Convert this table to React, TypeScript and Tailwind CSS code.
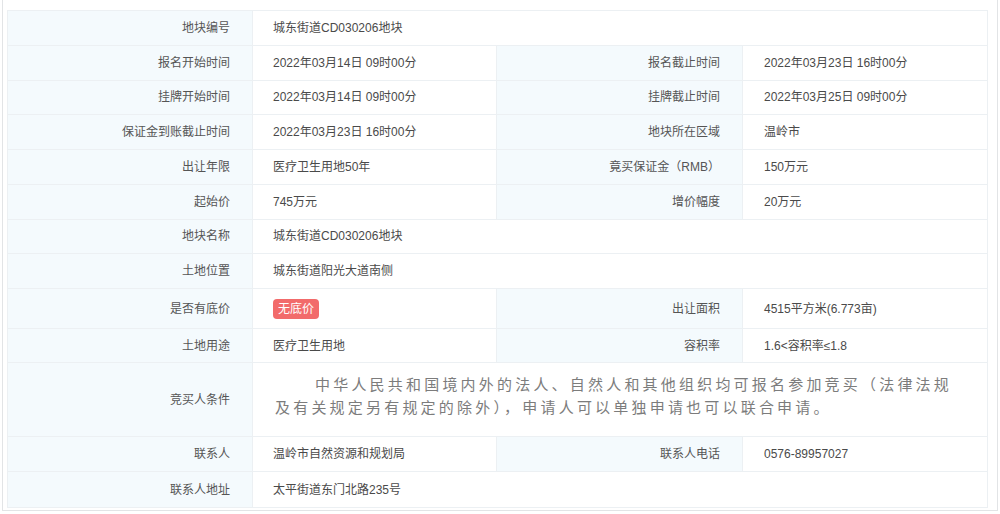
import type { ReactNode } from "react"

type Cell = { label: string; value: ReactNode }
type Row = { h: string; cells: Cell[] }

const labelCls =
  "flex items-center justify-end pr-[22px] bg-[#f4fafd] border-r border-b border-[#ecf0f3] text-[#555] whitespace-nowrap"
const valueCls =
  "flex items-center border-r border-b border-[#ecf0f3] text-[#4a4a4a] whitespace-nowrap"

const rows: Row[] = [
  { h: "h-[34.75px]", cells: [{ label: "地块编号", value: "城东街道CD030206地块" }] },
  {
    h: "h-[34.75px]",
    cells: [
      { label: "报名开始时间", value: "2022年03月14日 09时00分" },
      { label: "报名截止时间", value: "2022年03月23日 16时00分" },
    ],
  },
  {
    h: "h-[34.75px]",
    cells: [
      { label: "挂牌开始时间", value: "2022年03月14日 09时00分" },
      { label: "挂牌截止时间", value: "2022年03月25日 09时00分" },
    ],
  },
  {
    h: "h-[34.75px]",
    cells: [
      { label: "保证金到账截止时间", value: "2022年03月23日 16时00分" },
      { label: "地块所在区域", value: "温岭市" },
    ],
  },
  {
    h: "h-[34.75px]",
    cells: [
      { label: "出让年限", value: "医疗卫生用地50年" },
      { label: "竟买保证金（RMB）", value: "150万元" },
    ],
  },
  {
    h: "h-[34.75px]",
    cells: [
      { label: "起始价", value: "745万元" },
      { label: "增价幅度", value: "20万元" },
    ],
  },
  { h: "h-[34.75px]", cells: [{ label: "地块名称", value: "城东街道CD030206地块" }] },
  { h: "h-[34.75px]", cells: [{ label: "土地位置", value: "城东街道阳光大道南侧" }] },
  {
    h: "h-[40px]",
    cells: [
      {
        label: "是否有底价",
        value: (
          <span className="inline-flex items-center h-[20px] px-[5px] rounded-[4px] bg-[#f26b6b] text-white text-[12px]">
            无底价
          </span>
        ),
      },
      { label: "出让面积", value: "4515平方米(6.773亩)" },
    ],
  },
  {
    h: "h-[34px]",
    cells: [
      { label: "土地用途", value: "医疗卫生用地" },
      { label: "容积率", value: "1.6<容积率≤1.8" },
    ],
  },
]

const tail: Row[] = [
  {
    h: "h-[35px]",
    cells: [
      { label: "联系人", value: "温岭市自然资源和规划局" },
      { label: "联系人电话", value: "0576-89957027" },
    ],
  },
  { h: "h-[36px]", cells: [{ label: "联系人地址", value: "太平街道东门北路235号" }] },
]

const TableRow = ({ row }: { row: Row }) => {
  const single = row.cells.length === 1
  return (
    <>
      {row.cells.map((c, i) => (
        <div key={c.label} className="contents">
          <div className={`${labelCls} ${row.h}`}>{c.label}</div>
          <div
            className={`${valueCls} ${row.h} ${single ? "col-span-3" : ""} ${
              i === 0 ? "pl-[20px]" : "pl-[21px]"
            }`}
          >
            {c.value}
          </div>
        </div>
      ))}
    </>
  )
}

const App = () => {
  return (
    <div className="w-[1000px] h-[514px] bg-white overflow-hidden font-['Liberation_Sans','Noto_Sans_CJK_SC',sans-serif] text-[12px]">
      <div className="ml-[2px] w-[996px] h-[511px] border-x border-b border-[#e2e4e6] pt-[10px] pl-[4px]">
        <div className="grid grid-cols-[245px_244px_246px_245px] w-[981px] border-t border-l border-[#ecf0f3]">
          {rows.map((r, i) => (
            <TableRow key={i} row={r} />
          ))}
          <div className={`${labelCls} h-[74px]`}>竞买人条件</div>
          <div className="col-span-3 h-[74px] flex items-center pl-[22px] pb-[10px] border-r border-b border-[#ecf0f3]">
            <p className="font-['Noto_Sans_CJK_SC',sans-serif] text-[15px] leading-[23px] tracking-[3.2px] text-[#7c7c7c] whitespace-nowrap">
              <span className="block indent-[40px]">
                中华人民共和国境内外的法人、自然人和其他组织均可报名参加竞买（法律法规
              </span>
              <span className="block">及有关规定另有规定的除外），申请人可以单独申请也可以联合申请。</span>
            </p>
          </div>
          {tail.map((r, i) => (
            <TableRow key={i} row={r} />
          ))}
        </div>
      </div>
    </div>
  )
}

export default App
